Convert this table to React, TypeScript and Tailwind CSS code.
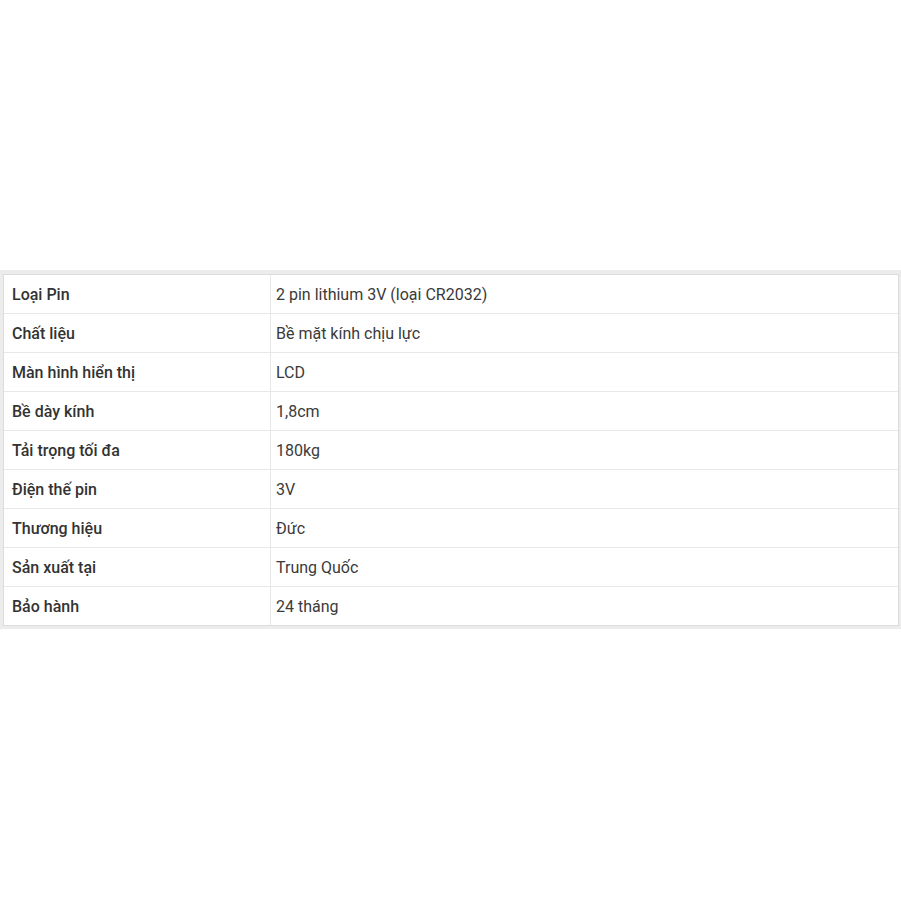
import React from 'react';

const specs: [string, string][] = [
  ['Loại Pin', '2 pin lithium 3V (loại CR2032)'],
  ['Chất liệu', 'Bề mặt kính chịu lực'],
  ['Màn hình hiển thị', 'LCD'],
  ['Bề dày kính', '1,8cm'],
  ['Tải trọng tối đa', '180kg'],
  ['Điện thế pin', '3V'],
  ['Thương hiệu', 'Đức'],
  ['Sản xuất tại', 'Trung Quốc'],
  ['Bảo hành', '24 tháng'],
];

const App: React.FC = () => {
  return (
    <div className="min-h-screen bg-white pt-[270px]" style={{ fontFamily: 'Roboto, "Noto Sans", sans-serif' }}>
      <div className="bg-[#ececec] pl-[3px] pr-[2px] pt-[4px] pb-[3px]">
        <div className="border border-[#dcdcdc] bg-white">
          {specs.map(([label, value], i) => (
            <div
              key={label}
              className={`grid grid-cols-[267px_1fr] ${i > 0 ? 'h-[39px] border-t border-[#e8e8e8]' : 'h-[38px]'}`}
            >
              <div className="flex items-center pl-[8px] pt-[2px] border-r border-[#e8e8e8] text-[16px] font-medium text-[#333]">
                {label}
              </div>
              <div className="flex items-center pl-[5px] pt-[2px] text-[16px] text-[#3a3a3a]">{value}</div>
            </div>
          ))}
        </div>
      </div>
    </div>
  );
};

export default App;
